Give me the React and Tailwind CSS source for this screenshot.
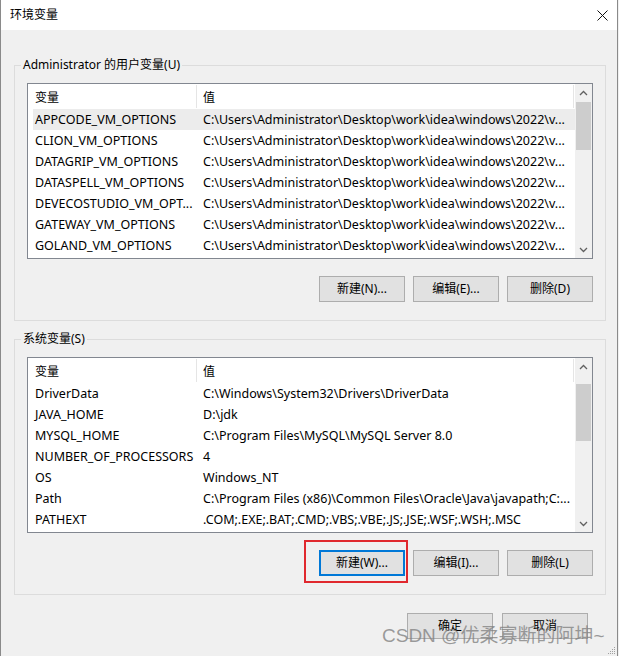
import React from "react";

const font = "font-['Noto_Sans','Noto_Sans_CJK_SC',sans-serif]";

const userVars = [
  ["APPCODE_VM_OPTIONS", String.raw`C:\Users\Administrator\Desktop\work\idea\windows\2022\v...`],
  ["CLION_VM_OPTIONS", String.raw`C:\Users\Administrator\Desktop\work\idea\windows\2022\v...`],
  ["DATAGRIP_VM_OPTIONS", String.raw`C:\Users\Administrator\Desktop\work\idea\windows\2022\v...`],
  ["DATASPELL_VM_OPTIONS", String.raw`C:\Users\Administrator\Desktop\work\idea\windows\2022\v...`],
  ["DEVECOSTUDIO_VM_OPT...", String.raw`C:\Users\Administrator\Desktop\work\idea\windows\2022\v...`],
  ["GATEWAY_VM_OPTIONS", String.raw`C:\Users\Administrator\Desktop\work\idea\windows\2022\v...`],
  ["GOLAND_VM_OPTIONS", String.raw`C:\Users\Administrator\Desktop\work\idea\windows\2022\v...`],
];

const systemVars = [
  ["DriverData", String.raw`C:\Windows\System32\Drivers\DriverData`],
  ["JAVA_HOME", String.raw`D:\jdk`],
  ["MYSQL_HOME", String.raw`C:\Program Files\MySQL\MySQL Server 8.0`],
  ["NUMBER_OF_PROCESSORS", "4"],
  ["OS", "Windows_NT"],
  ["Path", String.raw`C:\Program Files (x86)\Common Files\Oracle\Java\javapath;C:...`],
  ["PATHEXT", ".COM;.EXE;.BAT;.CMD;.VBS;.VBE;.JS;.JSE;.WSF;.WSH;.MSC"],
];

const Chevron = ({ up }) => (
  <svg width="9" height="6" viewBox="0 0 9 6" className="text-[#606060]">
    <path
      d={up ? "M1 5 L4.5 1.5 L8 5" : "M1 1 L4.5 4.5 L8 1"}
      fill="none"
      stroke="currentColor"
      strokeWidth="1.3"
    />
  </svg>
);

const ScrollBar = ({ thumbTop, thumbHeight }) => (
  <div className="w-[17px] h-full bg-[#f0f0f0] flex flex-col">
    <div className="h-[17px] flex items-center justify-center">
      <Chevron up />
    </div>
    <div className="flex-1">
      <div
        className="bg-[#cdcdcd] mx-[1px]"
        style={{ marginTop: thumbTop, height: thumbHeight }}
      />
    </div>
    <div className="h-[17px] flex items-center justify-center">
      <Chevron />
    </div>
  </div>
);

const VarList = ({ rows, selected, thumbTop, thumbHeight }) => (
  <div className="ml-[6px] w-[566px] h-[176px] border border-[#828790] bg-white flex overflow-hidden">
    <div className="flex-1 flex flex-col min-w-0">
      <div className="h-[25px] flex items-center shrink-0">
        <div className="w-[169px] h-[23px] pl-[7px] border-r border-[#e5e5e5] leading-[25px]">变量</div>
        <div className="flex-1 h-[23px] pl-[6px] border-r border-[#e5e5e5] mr-[1px] leading-[25px]">值</div>
      </div>
      {rows.map(([name, value], i) => (
        <div
          key={name}
          className={`ml-[5px] h-[21px] flex shrink-0 text-[12.5px] leading-[21px] ${i === selected ? "bg-[#ececec]" : ""}`}
        >
          <div className="w-[163px] pl-[2px] whitespace-nowrap overflow-hidden">{name}</div>
          <div className="flex-1 pl-[7px] whitespace-nowrap overflow-hidden">{value}</div>
        </div>
      ))}
    </div>
    <ScrollBar thumbTop={thumbTop} thumbHeight={thumbHeight} />
  </div>
);

const Button = ({ children, focused }) => (
  <button
    className={`w-[86px] h-[26px] bg-[#e1e1e1] ${focused ? "border-2 border-[#0078d7]" : "border border-[#adadad]"} text-[12px] text-black leading-none`}
  >
    {children}
  </button>
);

const Group = ({ title, children }) => (
  <fieldset className="w-[592px] border border-[#dcdcdc] pl-[6px] pr-[11px] pb-[18px]">
    <legend className="px-[2px] leading-[18px]">{title}</legend>
    {children}
  </fieldset>
);

export default function App() {
  return (
    <div className={`relative w-[619px] h-[656px] overflow-hidden bg-[#f0f0f0] text-[12px] text-black ${font}`}>
      <div className="w-[618px] h-[656px] border-l border-r border-[#8a8a8a] flex flex-col">
        {/* title bar */}
        <div className="h-[30px] bg-white flex items-center justify-between pl-[9px] pr-[9px] shrink-0">
          <span className="leading-none">环境变量</span>
          <svg width="11" height="11" viewBox="0 0 11 11">
            <path d="M0.5 0.5 L10.5 10.5 M10.5 0.5 L0.5 10.5" stroke="#111" strokeWidth="1" />
          </svg>
        </div>

        <div className="pl-[13px] pt-[26px] flex flex-col">
          <Group title="Administrator 的用户变量(U)">
            <div className="mt-[9px]">
              <VarList rows={userVars} selected={0} thumbTop={1} thumbHeight={48} />
            </div>
            <div className="ml-[6px] w-[566px] mt-[17px] flex justify-end gap-[8px]">
              <Button>新建(N)...</Button>
              <Button>编辑(E)...</Button>
              <Button>删除(D)</Button>
            </div>
          </Group>

          <div className="mt-[9px]">
            <Group title="系统变量(S)">
              <div className="mt-[9px]">
                <VarList rows={systemVars} selected={-1} thumbTop={9} thumbHeight={57} />
              </div>
              <div className="ml-[6px] w-[566px] mt-[17px] flex justify-end gap-[8px]">
                <div className="relative">
                  <Button focused>新建(W)...</Button>
                  <div className="absolute -left-[15px] -top-[10px] w-[104px] h-[43px] border-2 border-[#e0282e] pointer-events-none" />
                </div>
                <Button>编辑(I)...</Button>
                <Button>删除(L)</Button>
              </div>
            </Group>
          </div>

          <div className="w-[592px] mt-[18px] pr-[18px] flex justify-end gap-[9px]">
            <Button>确定</Button>
            <Button>取消</Button>
          </div>
        </div>
      </div>

      {/* watermark */}
      <div className="absolute left-[382px] top-[624px] text-[19px] leading-[24px] whitespace-nowrap text-[rgba(125,125,125,0.75)] font-['Liberation_Sans','Noto_Sans_CJK_SC',sans-serif] pointer-events-none">
        CSDN @优柔寡断的阿坤~
      </div>

      {/* resize grip */}
      <svg width="8" height="8" viewBox="0 0 8 8" className="absolute right-[3px] bottom-[1px]">
        <rect x="6" y="0" width="1" height="1" fill="#a0a0a0" />
        <rect x="4" y="2" width="1" height="1" fill="#a0a0a0" />
        <rect x="6" y="2" width="1" height="1" fill="#a0a0a0" />
        <rect x="2" y="4" width="1" height="1" fill="#a0a0a0" />
        <rect x="4" y="4" width="1" height="1" fill="#a0a0a0" />
        <rect x="6" y="4" width="1" height="1" fill="#a0a0a0" />
        <rect x="0" y="6" width="1" height="1" fill="#a0a0a0" />
        <rect x="2" y="6" width="1" height="1" fill="#a0a0a0" />
        <rect x="4" y="6" width="1" height="1" fill="#a0a0a0" />
        <rect x="6" y="6" width="1" height="1" fill="#a0a0a0" />
      </svg>
    </div>
  );
}
